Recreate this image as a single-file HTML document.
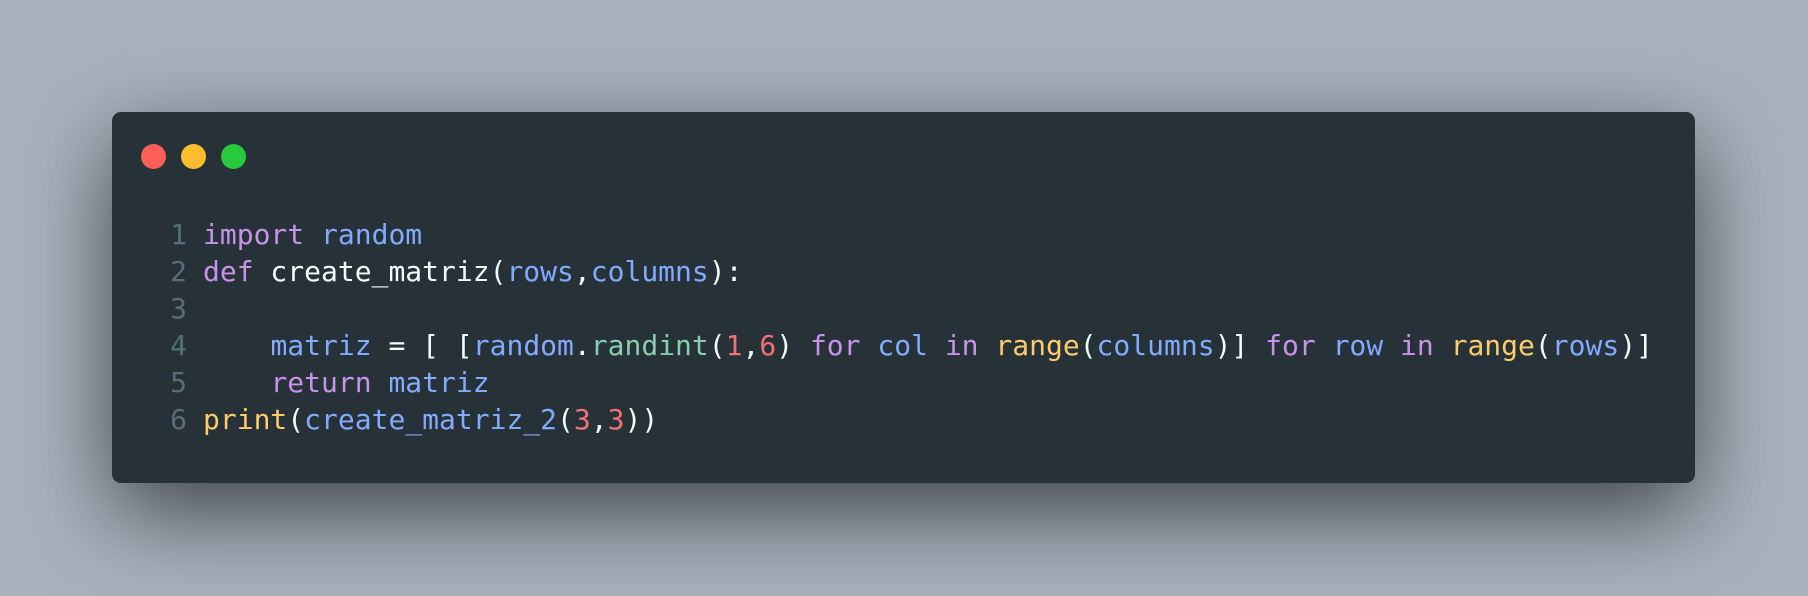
<!DOCTYPE html>
<html><head><style>
html,body{margin:0;padding:0}
body{width:1808px;height:596px;background:#a8b2bd;position:relative;overflow:hidden}
.win{position:absolute;left:112px;top:112px;width:1583px;height:371px;background:#263238;border-radius:9px;box-shadow:0 30px 90px rgba(0,0,0,0.62)}
.dot{position:absolute;top:144px;width:25px;height:25px;border-radius:50%}
pre{position:absolute;left:0;top:216px;margin:0;font-family:"DejaVu Sans Mono","Liberation Mono",monospace;font-size:28px;line-height:37.1px;color:#eeffff;white-space:pre}
.ln{position:absolute;left:150px;width:37px;text-align:right;color:#546e7a}
.code{position:absolute;left:203px}
.k{color:#c792ea}.b{color:#82aaff}.g{color:#89cdb0}.y{color:#ffcb6b}.r{color:#f07178}.w{color:#eeffff}
</style></head><body>
<div class="win"></div>
<div class="dot" style="left:141px;background:#ff5f56"></div>
<div class="dot" style="left:181px;background:#ffbd2e"></div>
<div class="dot" style="left:221px;background:#27c93f"></div>
<pre class="ln">1
2
3
4
5
6</pre>
<pre class="code"><span class="k">import</span> <span class="b">random</span>
<span class="k">def</span> create_matriz(<span class="b">rows</span>,<span class="b">columns</span>):

    <span class="b">matriz</span> = [ [<span class="b">random</span>.<span class="g">randint</span>(<span class="r">1</span>,<span class="r">6</span>) <span class="k">for</span> <span class="b">col</span> <span class="k">in</span> <span class="y">range</span>(<span class="b">columns</span>)] <span class="k">for</span> <span class="b">row</span> <span class="k">in</span> <span class="y">range</span>(<span class="b">rows</span>)]
    <span class="k">return</span> <span class="b">matriz</span>
<span class="y">print</span>(<span class="b">create_matriz_2</span>(<span class="r">3</span>,<span class="r">3</span>))</pre>
</body></html>
